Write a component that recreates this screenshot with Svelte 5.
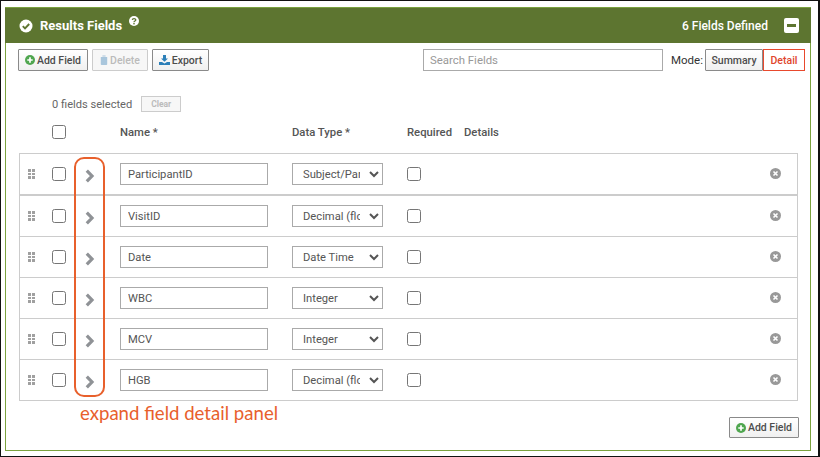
<script lang="ts">
  const fields = [
    { name: 'ParticipantID', type: 'Subject/Participant' },
    { name: 'VisitID', type: 'Decimal (floating point)' },
    { name: 'Date', type: 'Date Time' },
    { name: 'WBC', type: 'Integer' },
    { name: 'MCV', type: 'Integer' },
    { name: 'HGB', type: 'Decimal (floating point)' },
  ]
  const dots = [0, 1, 2, 3, 4, 5]
</script>

<div class="frame">
  <section class="panel">
    <header class="panel-head">
      <svg class="check" viewBox="0 0 14 14" width="14" height="14">
        <circle cx="7" cy="7" r="6.5" fill="#fff" />
        <path d="M3.8 7.2 6 9.4 10.2 5" fill="none" stroke="#5d7530" stroke-width="1.9" />
      </svg>
      <span class="title">Results Fields</span>
      <span class="help">
        <svg viewBox="0 0 10 10" width="10" height="10">
          <circle cx="5" cy="5" r="5" fill="#fff" />
          <path d="M3.3 3.9C3.4 2.2 6.8 2.2 6.8 3.9 6.8 5 5 5 5 6.2" fill="none" stroke="#5d7530" stroke-width="1.3" />
          <rect x="4.3" y="7" width="1.4" height="1.4" fill="#5d7530" />
        </svg>
      </span>
      <span class="count">6 Fields Defined</span>
      <span class="collapse"><i></i></span>
    </header>

    <div class="panel-body">
      <div class="toolbar">
        <button class="btn add">
          <svg viewBox="0 0 10 10" width="10" height="10">
            <circle cx="5" cy="5" r="5" fill="#4fa64f" />
            <path d="M5 2.3v5.4M2.3 5h5.4" stroke="#fff" stroke-width="1.7" />
          </svg>
          Add Field
        </button>
        <button class="btn delete disabled">
          <svg viewBox="0 0 8 10" width="8" height="10">
            <path d="M0.8 2H7.2V9.2C7.2 9.7 6.9 10 6.4 10H1.6C1.1 10 .8 9.7 .8 9.2ZM2.4 .4H5.6V1.5H2.4Z" fill="#a9c6dc" />
          </svg>
          Delete
        </button>
        <button class="btn export">
          <svg viewBox="0 0 11 10" width="11" height="10">
            <path d="M4 0H7V3.4H9L5.5 6.8 2 3.4H4ZM0 7H3L5.5 8.6 8 7H11V10H0Z" fill="#2c7fb8" />
          </svg>
          Export
        </button>
        <input class="search" type="text" placeholder="Search Fields" />
        <span class="mode">Mode:</span>
        <div class="mode-group">
          <button class="btn mode-btn">Summary</button>
          <button class="btn mode-btn active">Detail</button>
        </div>
      </div>

      <div class="selected">
        <span>0 fields selected</span>
        <button class="clear">Clear</button>
      </div>

      <div class="grid-head">
        <span class="checkbox"></span>
        <span class="col-name">Name *</span>
        <span class="col-type">Data Type *</span>
        <span class="col-req">Required</span>
        <span class="col-details">Details</span>
      </div>

      <div class="rows">
        {#each fields as field, i}
          <div class="row" class:first={i === 0}>
            <span class="handle">
              {#each dots as d}<i></i>{/each}
            </span>
            <span class="checkbox"></span>
            <svg class="chevron" viewBox="0 0 10 14" width="10" height="14">
              <path d="M1.8 1.6 7 7 1.8 12.4" fill="none" stroke="#8f9296" stroke-width="3.2" />
            </svg>
            <input class="name" type="text" value={field.name} />
            <select class="type">
              <option>{field.type}</option>
            </select>
            <span class="checkbox req"></span>
            <svg class="remove" viewBox="0 0 11 11" width="11" height="11">
              <circle cx="5.5" cy="5.5" r="5.5" fill="#999" />
              <path d="M3.5 3.5l4 4M7.5 3.5l-4 4" stroke="#fff" stroke-width="1.6" />
            </svg>
          </div>
        {/each}
      </div>

      <div class="foot">
        <button class="btn add">
          <svg viewBox="0 0 10 10" width="10" height="10">
            <circle cx="5" cy="5" r="5" fill="#4fa64f" />
            <path d="M5 2.3v5.4M2.3 5h5.4" stroke="#fff" stroke-width="1.7" />
          </svg>
          Add Field
        </button>
      </div>
    </div>

    <div class="callout"></div>
    <div class="callout-text">expand field detail panel</div>
  </section>
</div>

<style>
  :global(body) {
    margin: 0;
    background: #fff;
  }
  .frame {
    box-sizing: border-box;
    width: 820px;
    height: 457px;
    border: 1px solid #111;
    border-right-width: 2px;
    padding: 6px 7px 5px 4px;
    font-family: Roboto, "Liberation Sans", sans-serif;
    color: #333;
  }
  .panel {
    position: relative;
    box-sizing: border-box;
    height: 444px;
    border: 1px solid #7ba23f;
    border-top: 0;
  }
  .panel-head {
    display: flex;
    align-items: center;
    height: 36px;
    box-sizing: border-box;
    margin: 0 -1px;
    padding: 0 12px 0 14px;
    background: #5d7530;
    border-top: 1px solid #7ba23f;
    color: #fff;
  }
  .title {
    margin-left: 7px;
    font-size: 13px;
    font-weight: 700;
  }
  .help {
    display: flex;
    margin: -9px 0 0 7px;
  }
  .count {
    margin-left: auto;
    font-size: 12px;
    font-weight: 500;
  }
  .collapse {
    display: flex;
    align-items: center;
    justify-content: center;
    width: 15px;
    height: 15px;
    margin-left: 16px;
    background: #fff;
    border-radius: 2px;
  }
  .collapse i {
    width: 9px;
    height: 3px;
    background: #5d7530;
  }
  .panel-body {
    padding: 6px 5px 0 12px;
  }
  .toolbar {
    display: flex;
    align-items: center;
    height: 22px;
  }
  .btn {
    display: inline-flex;
    align-items: center;
    justify-content: center;
    gap: 2px;
    flex: none;
    box-sizing: border-box;
    height: 22px;
    margin-right: 4px;
    padding: 0;
    border: 1px solid #8a8a8a;
    border-radius: 1px;
    background: linear-gradient(#fff, #f0f0f0);
    font: 500 10.5px Roboto, sans-serif;
    white-space: nowrap;
    color: #4d4d4d;
  }
  .add {
    width: 70px;
  }
  .delete {
    width: 56px;
  }
  .export {
    width: 57px;
  }
  .btn.disabled {
    border-color: #ccc;
    color: #bbb;
    background: #f7f7f7;
  }
  .search {
    flex: none;
    box-sizing: border-box;
    width: 240px;
    height: 22px;
    margin-left: 210px;
    padding: 0 6px;
    border: 1px solid #aaa;
    border-radius: 0;
    font: 11.4px Roboto, sans-serif;
    color: #333;
  }
  .search::placeholder {
    color: #999;
  }
  .mode {
    margin-left: 8px;
    font-size: 11.5px;
    color: #333;
  }
  .mode-group {
    display: flex;
    margin-left: auto;
  }
  .mode-btn {
    margin: 0;
    width: 58px;
  }
  .mode-btn.active {
    width: 42px;
    border-color: #e8492d;
    border-radius: 0;
    background: #fff;
    color: #e0452c;
  }
  .selected {
    display: flex;
    align-items: center;
    gap: 9px;
    height: 16px;
    margin: 25px 0 0 34px;
    font-size: 11.1px;
    color: #666;
  }
  .clear {
    box-sizing: border-box;
    width: 40px;
    height: 16px;
    padding: 0;
    border: 1px solid #ccc;
    background: #f7f7f7;
    font: 700 8.5px Roboto, sans-serif;
    color: #bbb;
  }
  .checkbox {
    flex: none;
    box-sizing: border-box;
    width: 14px;
    height: 14px;
    border: 1px solid #767676;
    border-radius: 2.5px;
    background: #fff;
  }
  .grid-head {
    display: flex;
    align-items: center;
    height: 14px;
    margin: 13px 0 0 34px;
    font-size: 11.3px;
    font-weight: 500;
    color: #555;
  }
  .col-name {
    margin-left: 54px;
    width: 172px;
  }
  .col-type {
    width: 115px;
  }
  .col-req {
    width: 57px;
  }
  .rows {
    margin: 14px 7px 0 1px;
    border: 1px solid #ccc;
  }
  .row {
    display: flex;
    align-items: center;
    box-sizing: border-box;
    height: 41px;
    padding: 0 0 0 8px;
    border-top: 1px solid #ccc;
  }
  .row.first {
    height: 41px;
    border-top: 0;
    border-bottom: 1px solid #ccc;
  }
  .handle {
    display: grid;
    grid-template-columns: 3px 3px;
    gap: 1px;
    flex: none;
    width: 7px;
  }
  .handle i {
    width: 3px;
    height: 2.5px;
    background: #a0a0a0;
  }
  .row > .checkbox {
    margin-left: 17px;
  }
  .chevron {
    flex: none;
    margin: 3px 0 0 19px;
  }
  .name {
    box-sizing: border-box;
    width: 148px;
    height: 22px;
    margin-left: 25px;
    padding: 0 7px;
    border: 1px solid #aaa;
    border-radius: 0;
    font: 11.2px Roboto, sans-serif;
    color: #555;
  }
  .type {
    box-sizing: border-box;
    width: 91px;
    height: 22px;
    margin-left: 24px;
    padding: 0 6px 0 6px;
    border: 1px solid #aaa;
    border-radius: 0;
    background: #fff;
    font: 11.2px Roboto, sans-serif;
    color: #555;
  }
  .row > .req {
    margin-left: 24px;
  }
  .remove {
    margin: -2px 16px 0 auto;
  }
  .foot {
    display: flex;
    justify-content: flex-end;
    margin: 16px 6px 0 0;
  }
  .foot .btn {
    margin: 0;
    height: 21px;
  }
  .callout {
    position: absolute;
    left: 68px;
    top: 150px;
    box-sizing: border-box;
    width: 31px;
    height: 240px;
    border: 2px solid #e8602c;
    border-radius: 10px;
    pointer-events: none;
  }
  .callout-text {
    position: absolute;
    left: 74px;
    top: 395px;
    font: 18.6px Lato, "Open Sans", sans-serif;
    color: #e8602c;
  }
</style>
